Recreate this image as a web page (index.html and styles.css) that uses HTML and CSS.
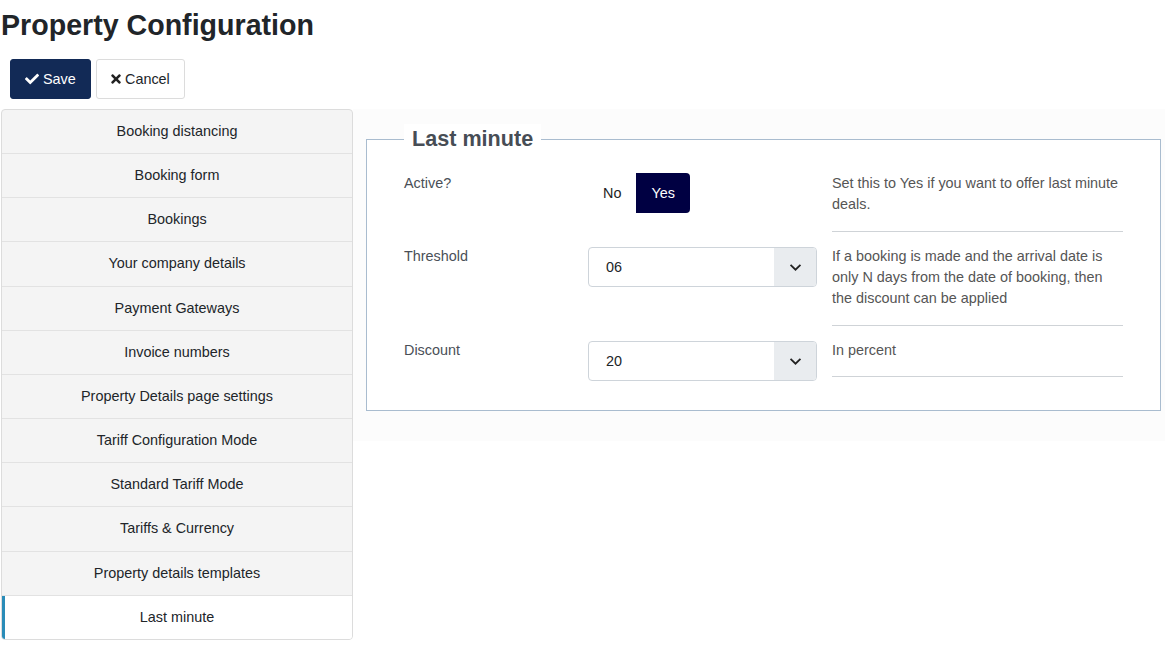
FILE: index.html
```html
<!DOCTYPE html>
<html>
<head>
<meta charset="utf-8">
<link rel="stylesheet" href="styles.css">
</head>
<body>
<h1 class="page-title">Property Configuration</h1>
<div class="toolbar">
  <button class="btn btn-save"><svg class="ico" viewBox="0 0 512 512" width="14" height="14"><path fill="#fff" d="M173.9 439.4L7.5 273c-10-10-10-26.2 0-36.2l36.2-36.2c10-10 26.2-10 36.2 0L192 312.7 432.1 72.6c10-10 26.2-10 36.2 0l36.2 36.2c10 10 10 26.2 0 36.2L210.1 439.4c-10 10-26.2 10-36.2 0z"/></svg>Save</button>
  <button class="btn btn-cancel"><svg class="ico" viewBox="0 0 352 512" width="10" height="14"><path fill="#222" d="M242.7 256l100.1-100.1c12.3-12.3 12.3-32.2 0-44.5l-22.2-22.2c-12.3-12.3-32.2-12.3-44.5 0L176 189.3 75.9 89.2c-12.3-12.3-32.2-12.3-44.5 0L9.2 111.4c-12.3 12.3-12.3 32.2 0 44.5L109.3 256 9.2 356.1c-12.3 12.3-12.3 32.2 0 44.5l22.2 22.2c12.3 12.3 32.2 12.3 44.5 0L176 322.7l100.1 100.1c12.3 12.3 32.2 12.3 44.5 0l22.2-22.2c12.3-12.3 12.3-32.2 0-44.5L242.7 256z"/></svg>Cancel</button>
</div>
<div class="layout">
  <ul class="side-nav">
    <li class="nav-item">Booking distancing</li>
    <li class="nav-item">Booking form</li>
    <li class="nav-item">Bookings</li>
    <li class="nav-item">Your company details</li>
    <li class="nav-item">Payment Gateways</li>
    <li class="nav-item">Invoice numbers</li>
    <li class="nav-item">Property Details page settings</li>
    <li class="nav-item">Tariff Configuration Mode</li>
    <li class="nav-item">Standard Tariff Mode</li>
    <li class="nav-item">Tariffs &amp; Currency</li>
    <li class="nav-item">Property details templates</li>
    <li class="nav-item active">Last minute</li>
  </ul>
  <div class="content">
    <div class="content-panel">
      <fieldset class="config-set">
        <legend class="config-legend">Last minute</legend>
        <div class="row row-first">
          <div class="row-label">Active?</div>
          <div class="row-control">
            <div class="toggle">
              <span class="toggle-opt">No</span>
              <span class="toggle-opt on">Yes</span>
            </div>
          </div>
          <div class="row-help">Set this to Yes if you want to offer last minute deals.</div>
        </div>
        <div class="row">
          <div class="row-label">Threshold</div>
          <div class="row-control">
            <div class="select"><span class="select-val">06</span><span class="select-arrow"><svg viewBox="0 0 14 10" width="13" height="9"><path d="M1.5 2l5.5 5.5L12.5 2" fill="none" stroke="#222" stroke-width="2"/></svg></span></div>
          </div>
          <div class="row-help">If a booking is made and the arrival date is only N days from the date of booking, then the discount can be applied</div>
        </div>
        <div class="row">
          <div class="row-label">Discount</div>
          <div class="row-control">
            <div class="select"><span class="select-val">20</span><span class="select-arrow"><svg viewBox="0 0 14 10" width="13" height="9"><path d="M1.5 2l5.5 5.5L12.5 2" fill="none" stroke="#222" stroke-width="2"/></svg></span></div>
          </div>
          <div class="row-help">In percent</div>
        </div>
      </fieldset>
    </div>
  </div>
</div>
</body>
</html>
```

FILE: styles.css
```css
* { box-sizing: border-box; }
html, body { margin: 0; padding: 0; background: #fff; }
body {
  font-family: "Liberation Sans", Arial, sans-serif;
  font-size: 14.4px;
  color: #212529;
  padding: 0 1px;
  overflow: hidden;
}
.page-title {
  font-size: 28.6px;
  font-weight: bold;
  line-height: 34px;
  margin: 8px 0 0 0;
  color: #212529;
}
.toolbar {
  display: flex;
  gap: 5px;
  padding: 17px 0 0 9px;
  height: 67px;
}
.btn {
  height: 40px;
  display: inline-flex;
  align-items: center;
  font-family: "Liberation Sans", Arial, sans-serif;
  font-size: 14.4px;
  border-radius: 3px;
  cursor: pointer;
}
.btn .ico { margin-right: 4px; }
.btn-save {
  background: #122a56;
  color: #fff;
  border: 1px solid #122a56;
  padding: 0 14px 0 14px;
  width: 81px;
}
.btn-cancel {
  background: #fff;
  color: #212529;
  border: 1px solid #dcdcdc;
  padding: 0 0 0 14px;
  width: 89px;
}
.layout {
  display: flex;
  align-items: flex-start;
}
.side-nav {
  list-style: none;
  margin: 0;
  padding: 0;
  width: 352px;
  flex: none;
  border: 1px solid #dcdcdc;
  border-radius: 4px;
  overflow: hidden;
  background: #f4f4f4;
}
.nav-item {
  height: 44.17px;
  line-height: 21px;
  padding: 11px 10px;
  text-align: center;
  border-bottom: 1px solid #e2e2e2;
  color: #212529;
}
.nav-item:last-child { border-bottom: none; height: 43.17px; }
.nav-item.active {
  background: #fff;
  border-left: 3px solid #2a8cb8;
  padding-left: 7px;
}
.content { flex: 1; min-width: 0; }
.content-panel {
  background: #fcfcfc;
  padding: 15px 4px 30px 13px;
}
.config-set {
  margin: 0;
  background: #fff;
  border: 1px solid #a9bccf;
  padding: 18px 37px 29px 37px;
  min-width: 0;
}
.config-legend {
  font-size: 21.6px;
  font-weight: bold;
  color: #474d55;
  padding: 0 8px;
  line-height: 30px;
  background: #fff;
}
.row {
  display: grid;
  grid-template-columns: 184px 244px 1fr;
  align-items: start;
  margin-bottom: 14px;
}
.row:last-child { margin-bottom: 0; }
.row-label {
  color: #4a4f57;
  line-height: 21px;
}
.row-control { padding-top: 1px; }
.row-first .row-label,
.row-first .row-help { padding-top: 1px; }
.row-help {
  color: #555;
  line-height: 21px;
  padding-bottom: 16px;
  border-bottom: 1px solid #cfd3d7;
}
.row:last-child .row-help { padding-bottom: 15px; }
.toggle { display: flex; }
.toggle-opt {
  height: 40px;
  display: inline-flex;
  align-items: center;
  padding: 0 15px;
  color: #222;
}
.toggle-opt.on {
  background: #000042;
  color: #fff;
  border-radius: 0 4px 4px 0;
}
.select {
  width: 229px;
  height: 40px;
  border: 1px solid #ced4da;
  border-radius: 4px;
  display: flex;
  overflow: hidden;
  background: #fff;
}
.select-val {
  flex: 1;
  padding-left: 17px;
  display: flex;
  align-items: center;
  color: #212529;
}
.select-arrow {
  width: 42px;
  background: #e9ecef;
  display: flex;
  align-items: center;
  justify-content: center;
}
```
